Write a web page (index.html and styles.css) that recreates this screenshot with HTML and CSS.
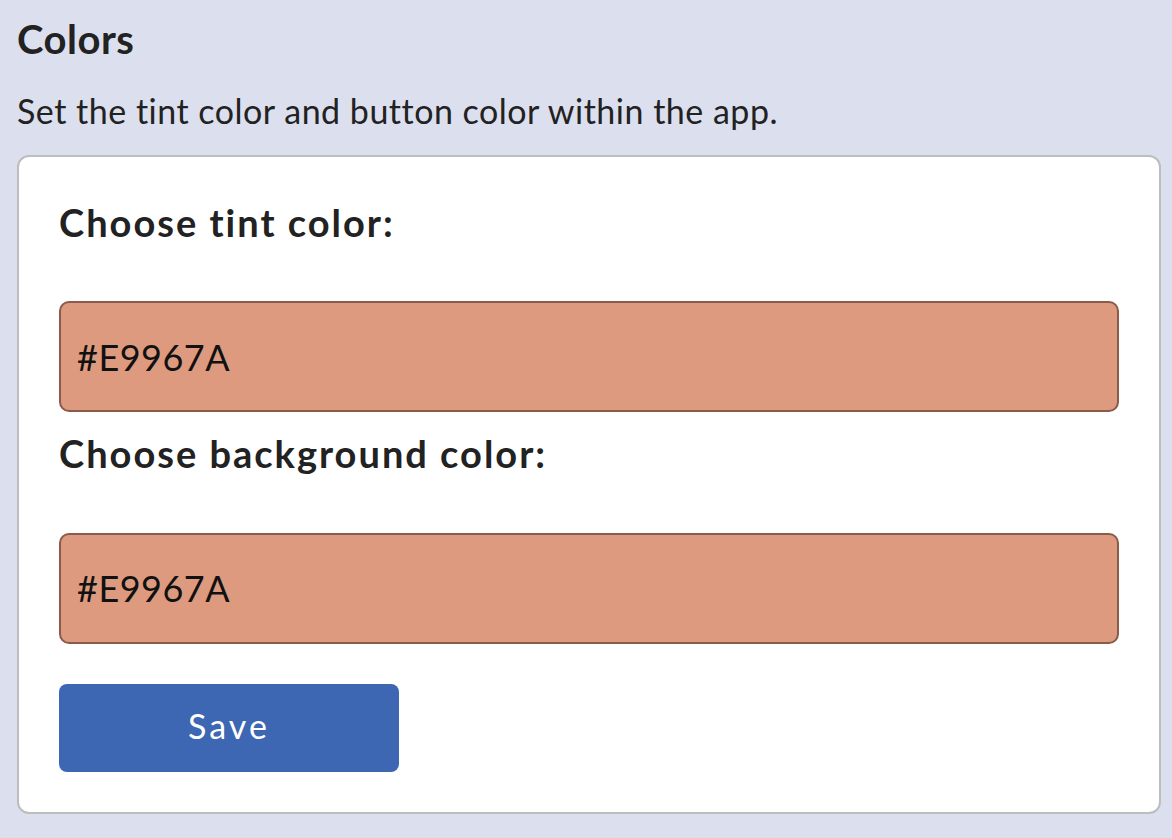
FILE: index.html
```html
<!DOCTYPE html>
<html lang="en">
<head>
  <meta charset="UTF-8">
  <meta name="viewport" content="width=device-width, initial-scale=1">
  <title>Colors</title>
  <link rel="stylesheet" href="styles.css">
</head>
<body>

  <div class="section">
    <h2 class="section-title">Colors</h2>
    <p class="section-desc">Set the tint color and button color within the app.</p>

    <!-- Color settings form -->
    <form class="card">
      <label class="field-label" for="tint">Choose tint color:</label>
      <input class="color-input" id="tint" type="text" value="#E9967A">

      <label class="field-label" for="background">Choose background color:</label>
      <input class="color-input" id="background" type="text" value="#E9967A">

      <button class="save-btn" type="button">Save</button>
    </form>
  </div>

</body>
</html>
```

FILE: styles.css
```css
body {
  font-family: Lato, "Noto Sans", sans-serif;
  margin: 0;
  background: #dcdfee;
  color: #222;
}

.section {
  padding: 15px 11px 24px 17px;
}

.section-title {
  font-size: 40px;
  font-weight: 700;
  letter-spacing: 0.5px;
  margin: 0;
  line-height: 1.2;
}

.section-desc {
  font-size: 34px;
  letter-spacing: 0.5px;
  margin: 28px 0 23px;
  line-height: 1.2;
}

.card {
  display: flex;
  flex-direction: column;
  align-items: flex-start;
  background: #fff;
  border: 2px solid #bdbdbd;
  border-radius: 12px;
  padding: 43px 40px 40px;
}

.field-label {
  font-size: 38px;
  font-weight: 700;
  letter-spacing: 2px;
  line-height: 1.2;
  margin-bottom: 56px;
}

.color-input {
  box-sizing: border-box;
  width: 100%;
  height: 111px;
  margin: 0 0 19px;
  padding: 0 16px;
  font-family: inherit;
  font-size: 36px;
  letter-spacing: 0.5px;
  color: #111;
  background: #dd9a7e;
  border: 2px solid #8a5a4a;
  border-radius: 10px;
}

.save-btn {
  width: 340px;
  height: 88px;
  margin-top: 21px;
  padding-bottom: 6px;
  font-family: inherit;
  font-size: 34px;
  letter-spacing: 3px;
  color: #fff;
  background: #3d66b3;
  border: none;
  border-radius: 8px;
  cursor: pointer;
}
```
